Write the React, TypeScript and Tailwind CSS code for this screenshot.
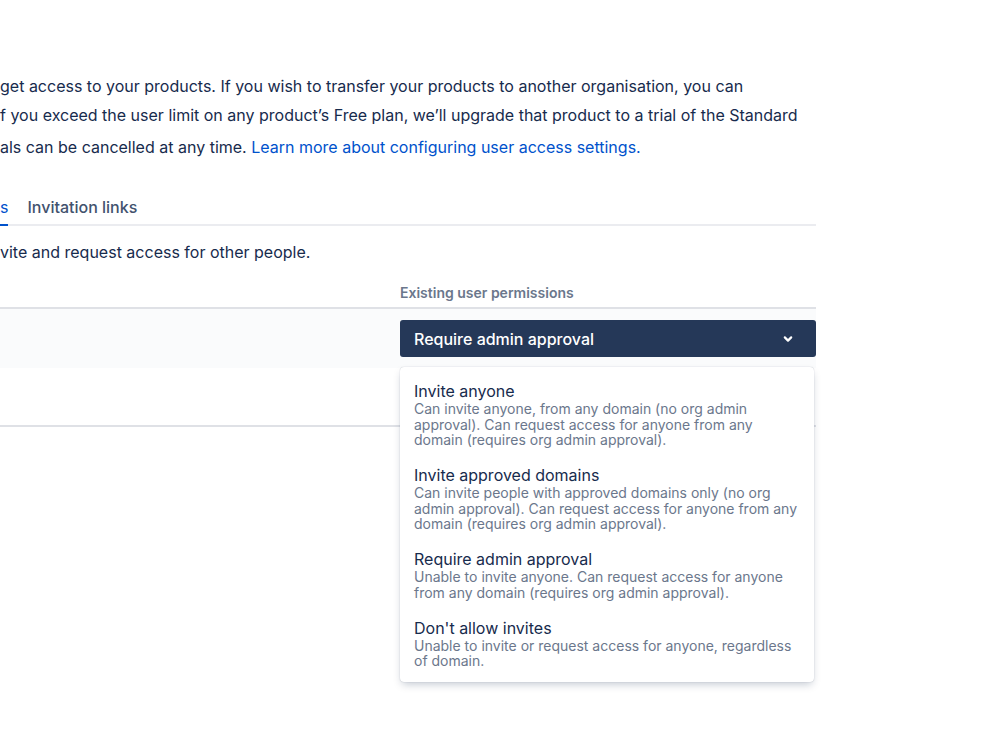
import React from 'react';

const options = [
  {
    title: 'Invite anyone',
    desc: 'Can invite anyone, from any domain (no org admin approval). Can request access for anyone from any domain (requires org admin approval).',
  },
  {
    title: 'Invite approved domains',
    desc: 'Can invite people with approved domains only (no org admin approval). Can request access for anyone from any domain (requires org admin approval).',
  },
  {
    title: 'Require admin approval',
    desc: 'Unable to invite anyone. Can request access for anyone from any domain (requires org admin approval).',
  },
  {
    title: "Don't allow invites",
    desc: 'Unable to invite or request access for anyone, regardless of domain.',
  },
];

function ChevronDown() {
  return (
    <svg width="12" height="12" viewBox="0 0 12 12" fill="none">
      <path d="M2.8 4.4L6 7.6L9.2 4.4" stroke="white" strokeWidth="2.2" strokeLinecap="round" strokeLinejoin="round" />
    </svg>
  );
}

export default function App() {
  return (
    <div className="w-[999px] h-[748px] bg-white overflow-hidden text-[#172B4D] font-['Inter','Liberation_Sans',sans-serif]">
      <div className="w-[816px] pt-[74px]">
        {/* Intro paragraph */}
        <div className="text-[16px] whitespace-nowrap">
          <div className="h-[29px] leading-[24px]">
            get access to your products. If you wish to transfer your products to another organisation, you can
          </div>
          <div className="h-[32px] leading-[24px]">
            f you exceed the user limit on any product’s Free plan, we’ll upgrade that product to a trial of the Standard
          </div>
          <div className="h-[24px] leading-[24px]">
            als can be cancelled at any time.{' '}
            <a className="text-[#0052CC]">Learn more about configuring user access settings.</a>
          </div>
        </div>

        {/* Tabs */}
        <div className="mt-[36px] flex items-end border-b-2 border-[#EBECF0]">
          <div className="relative h-[29px] leading-[24px] text-[16px] text-[#0052CC]">
            s
            <div className="absolute left-0 right-0 -bottom-[2px] h-[2px] bg-[#0052CC]" />
          </div>
          <div className="ml-[19px] h-[29px] leading-[24px] text-[16px] text-[#42526E] font-medium">Invitation links</div>
        </div>

        <div className="mt-[14px] text-[16px] leading-[24px]">vite and request access for other people.</div>

        {/* Table */}
        <div className="mt-[19px]">
          <div className="flex border-b-2 border-[#DFE1E6] pb-[4px]">
            <div className="w-[400px]" />
            <div className="text-[14px] leading-[20px] font-semibold text-[#6B778C]">Existing user permissions</div>
          </div>
          <div className="flex h-[59px] bg-[#FAFBFC] pt-[11px]">
            <div className="w-[400px]" />
            <div className="relative flex-1">
              <div className="flex h-[37px] items-center justify-between rounded-[3px] bg-[#253858] pl-[14px] pr-[22px] text-[16px] font-medium text-white">
                <span>Require admin approval</span>
                <ChevronDown />
              </div>
              {/* Open menu */}
              <div className="absolute left-0 top-[47px] z-10 w-[414px] rounded-[4px] bg-white pt-[5px] pb-[5px] shadow-[0_4px_8px_-2px_rgba(9,30,66,0.25),0_0_1px_rgba(9,30,66,0.31)]">
                {options.map((o) => (
                  <div key={o.title} className="px-[14px] pt-[9px] pb-[8.5px]">
                    <div className="text-[16px] leading-[20px] text-[#172B4D]">{o.title}</div>
                    <div className="text-[14px] leading-[15.5px] text-[#6B778C]">{o.desc}</div>
                  </div>
                ))}
              </div>
            </div>
          </div>
          <div className="h-[59px] border-b-2 border-[#DFE1E6]" />
        </div>
      </div>
    </div>
  );
}
